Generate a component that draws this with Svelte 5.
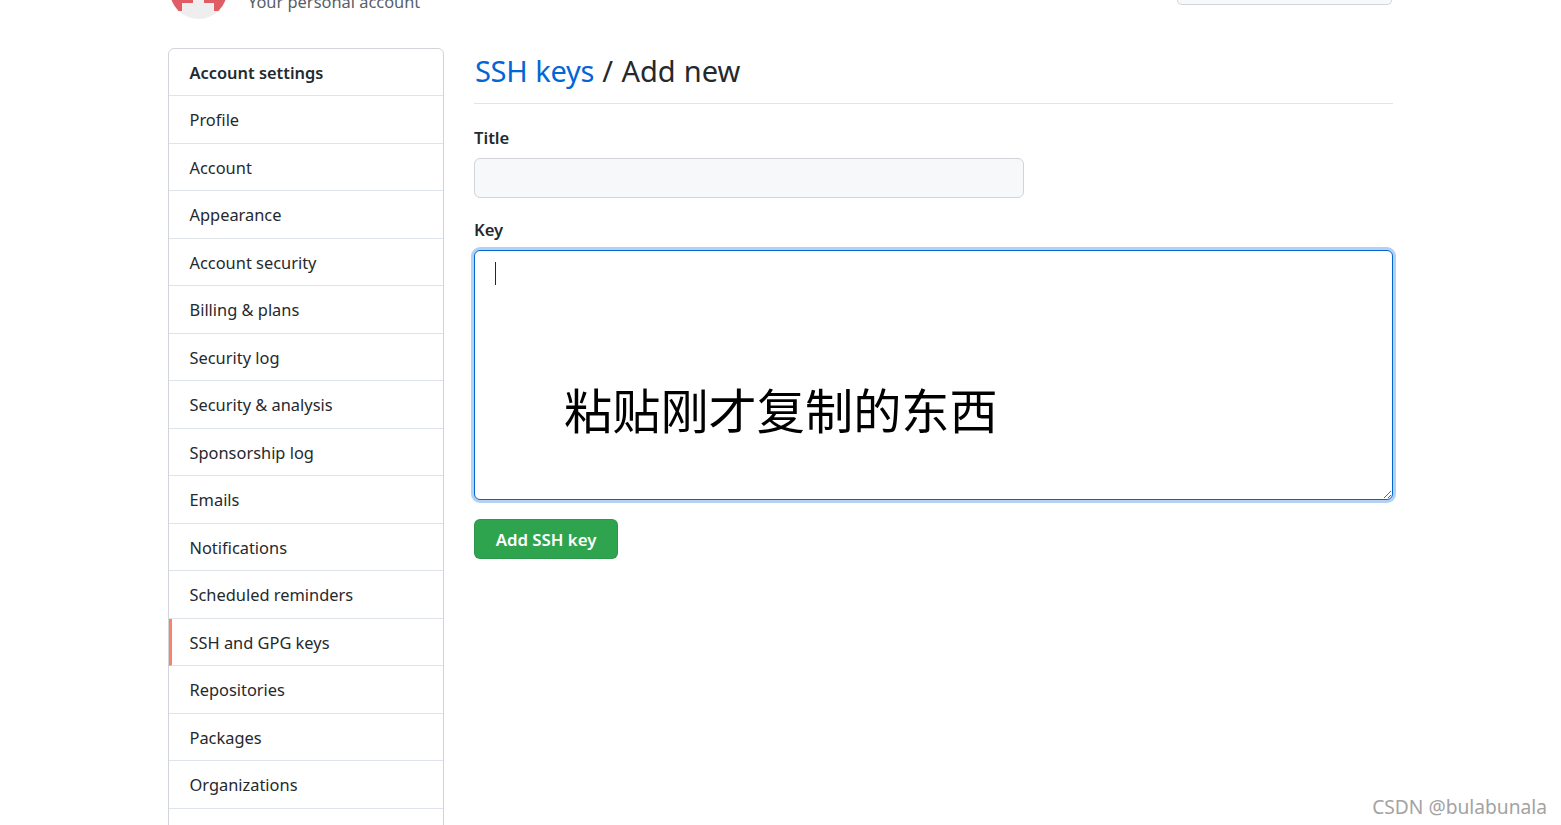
<script>
	const items = [
		'Profile',
		'Account',
		'Appearance',
		'Account security',
		'Billing & plans',
		'Security log',
		'Security & analysis',
		'Sponsorship log',
		'Emails',
		'Notifications',
		'Scheduled reminders',
		'SSH and GPG keys',
		'Repositories',
		'Packages',
		'Organizations',
		''
	];
	const current = 'SSH and GPG keys';
</script>

<div class="page">
	<header class="top">
		<div class="who">
			<svg class="avatar" viewBox="0 0 57 57" aria-hidden="true">
				<defs>
					<clipPath id="disc"><circle cx="28.5" cy="28.5" r="28.5" /></clipPath>
				</defs>
				<g clip-path="url(#disc)">
					<rect width="57" height="57" fill="#eeeeee" />
					<rect width="57" height="49" fill="#e05d66" />
					<path d="M23 30h11v11h10v8h-32v-8h11z" fill="#eeeeee" />
				</g>
			</svg>
			<span class="sub">Your personal account</span>
		</div>
		<div class="profile-btn"></div>
	</header>

	<div class="layout">
		<nav class="menu">
			<div class="menu-head">Account settings</div>
			{#each items as item}
				<div class="menu-item" class:selected={item === current}>{item}</div>
			{/each}
		</nav>

		<main class="main">
			<h1 class="title"><span class="link">SSH keys</span> / Add new</h1>
			<label class="label" for="title">Title</label>
			<input id="title" class="title-input" type="text" />
			<label class="label key-label" for="key">Key</label>
			<div class="key-wrap">
				<textarea id="key" class="key-input"></textarea>
				<span class="caret"></span>
				<span class="note">粘贴刚才复制的东西</span>
			</div>
			<button class="add">Add SSH key</button>
		</main>
	</div>

	<div class="mark">CSDN @bulabunala</div>
</div>

<style>
	:global(body) {
		margin: 0;
		background: #fff;
		overflow: hidden;
	}
	.page {
		position: relative;
		height: 825px;
		overflow: hidden;
		font-family: 'Noto Sans', 'Noto Sans CJK SC', sans-serif;
		color: #24292e;
	}
	.top {
		width: 1225px;
		height: 48px;
		margin: 0 auto;
		display: flex;
		justify-content: space-between;
		align-items: flex-start;
	}
	.who {
		display: flex;
		margin-top: -38px;
		margin-left: 2px;
	}
	.avatar {
		width: 57px;
		height: 57px;
	}
	.sub {
		margin-left: 21px;
		margin-top: 30px;
		font-size: 16.4px;
		line-height: 20px;
		color: #586069;
	}
	.profile-btn {
		width: 213px;
		height: 4px;
		margin-right: 1px;
		background: #f6f8fa;
		border: 1px solid #d1d5da;
		border-top: 0;
		border-radius: 0 0 6px 6px;
	}
	.layout {
		width: 1225px;
		margin: 0 auto;
		display: flex;
		gap: 30px;
		align-items: flex-start;
	}
	.menu {
		width: 276px;
		flex: none;
		box-sizing: border-box;
		border: 1px solid #d1d5da;
		border-radius: 6px;
		font-size: 16.4px;
	}
	.menu-head {
		height: 46px;
		line-height: 47px;
		padding-left: 20.5px;
		font-weight: 600;
		border-bottom: 1px solid #dfe3eb;
	}
	.menu-item {
		box-sizing: border-box;
		height: 47.5px;
		line-height: 47px;
		padding-left: 20.5px;
		border-bottom: 1px solid #dfe3eb;
	}
	.selected {
		padding-left: 17.5px;
		border-left: 3px solid #f9826c;
	}
	.main {
		flex: 1;
		display: flex;
		flex-direction: column;
		align-items: flex-start;
	}
	.title {
		box-sizing: border-box;
		width: 100%;
		height: 56px;
		margin: 0;
		font-size: 29px;
		font-weight: 400;
		line-height: 46px;
		word-spacing: 0.7px;
		border-bottom: 1px solid #e1e4e8;
	}
	.link {
		color: #0366d6;
		margin-left: 1px;
		letter-spacing: -0.3px;
	}
	.label {
		margin-top: 23px;
		height: 22px;
		font-size: 16.6px;
		line-height: 21px;
		font-weight: 600;
	}
	.key-label {
		margin-top: 21px;
	}
	.title-input {
		box-sizing: border-box;
		width: 550px;
		height: 40px;
		margin-top: 9px;
		background: #f6f8fa;
		border: 1px solid #d1d5da;
		border-radius: 6px;
		outline: none;
	}
	.key-wrap {
		position: relative;
		width: 100%;
		height: 250px;
		margin-top: 9px;
	}
	.key-input {
		display: block;
		box-sizing: border-box;
		width: 100%;
		height: 250px;
		margin: 0;
		border: 1.5px solid #0366d6;
		border-radius: 6px;
		outline: none;
		box-shadow: 0 0 0 3px rgba(3, 102, 214, 0.3);
		resize: vertical;
	}
	.caret {
		position: absolute;
		left: 21px;
		top: 12px;
		width: 1px;
		height: 23px;
		background: #24292e;
	}
	.note {
		position: absolute;
		left: 90px;
		top: 125px;
		font-size: 48.2px;
		line-height: 66px;
		color: #000;
		font-family: 'Noto Sans CJK SC', sans-serif;
	}
	.add {
		box-sizing: border-box;
		width: 144px;
		height: 40px;
		margin-top: 19px;
		padding: 0;
		background: #2ea44f;
		border: 1px solid rgba(27, 31, 35, 0.1);
		border-radius: 6px;
		color: #fff;
		font-family: inherit;
		font-size: 16.8px;
		font-weight: 600;
	}
	.mark {
		position: absolute;
		right: 14px;
		bottom: 5px;
		font-size: 19.2px;
		line-height: 26px;
		color: #a3a3a3;
	}
</style>
